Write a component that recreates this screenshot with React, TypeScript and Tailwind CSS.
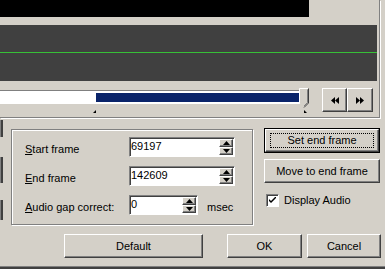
import type { ReactNode } from 'react'

// classic 3D bevels
const raised =
  'border border-t-white border-l-white border-r-[#404040] border-b-[#404040] shadow-[inset_-1px_-1px_0_#808080]'
const sunken =
  'border border-t-[#808080] border-l-[#808080] border-r-white border-b-white shadow-[inset_1px_1px_0_#404040]'

function Btn({ children, className = '' }: { children?: ReactNode; className?: string }) {
  return (
    <div className={`flex items-center justify-center bg-[#d4d0c8] ${raised} ${className}`}>
      {children}
    </div>
  )
}

function Arrow({ up }: { up?: boolean }) {
  return (
    <svg width="7" height="4" viewBox="0 0 7 4">
      <polygon points={up ? '3.5,0 7,4 0,4' : '0,0 7,0 3.5,4'} fill="#000" />
    </svg>
  )
}

function SpinField({ value, width }: { value: string; width: string }) {
  return (
    <div className={`flex h-[20px] bg-white ${sunken} ${width}`}>
      <span className="flex-1 pl-[1px] leading-[17px]">{value}</span>
      <div className="flex w-[15px] flex-col py-[1px] pr-[1px]">
        <Btn className="h-[8px]">
          <Arrow up />
        </Btn>
        <Btn className="h-[8px]">
          <Arrow />
        </Btn>
      </div>
    </div>
  )
}

function Label({ first, rest }: { first: string; rest: string }) {
  return (
    <span className="mt-[4px] w-[104px]">
      <span className="underline underline-offset-[1px]">{first}</span>
      {rest}
    </span>
  )
}

function Seek({ back }: { back?: boolean }) {
  return (
    <svg width="8" height="7" viewBox="0 0 8 7">
      {back ? (
        <>
          <polygon points="4,0 0,3.5 4,7" fill="#000" />
          <polygon points="8,0 4,3.5 8,7" fill="#000" />
        </>
      ) : (
        <>
          <polygon points="0,0 4,3.5 0,7" fill="#000" />
          <polygon points="4,0 8,3.5 4,7" fill="#000" />
        </>
      )}
    </svg>
  )
}

export default function App() {
  return (
    <div className="relative flex h-[269px] w-[385px] flex-col overflow-hidden bg-[#d4d0c8] font-['Liberation_Sans',Arial,sans-serif] text-[11px] text-black">
      {/* preview + audio + trackbar */}
      <div className="flex h-[118px] w-[380px] flex-col border-r border-b border-[#808080] shadow-[1px_1px_0_white]">
        <div className="h-[17px] w-[309px] bg-black" />
        <div className="mt-[8px] flex h-[56px] w-[377px] flex-col bg-[#404040]">
          <div className="mt-[27px] h-[1px] w-full bg-[#37c037]" />
        </div>
        <div className="relative flex h-[36px] items-start">
          <div className="mt-[9px] flex h-[14px] w-[304px] border-t border-[#808080] bg-white">
            <div className="mt-[2px] ml-[96px] h-[9px] w-[204px] bg-[#0a246a]" />
          </div>
          <svg className="absolute top-[7px] left-[299px]" width="10" height="21" viewBox="0 0 10 21">
            <polygon points="0.5,0.5 9.5,0.5 9.5,15 5,20 0.5,15" fill="#d4d0c8" />
            <polyline points="0.5,15 0.5,0.5 9,0.5" fill="none" stroke="#fff" />
            <polyline points="9.5,0.5 9.5,15 5,19.5" fill="none" stroke="#404040" />
            <polyline points="8.5,1.5 8.5,14.5 5,18" fill="none" stroke="#808080" />
          </svg>
          <svg className="absolute top-[29px] left-[93px]" width="3" height="3" viewBox="0 0 3 3">
            <polygon points="3,0 3,3 0,3" fill="#000" />
          </svg>
          <svg className="absolute top-[29px] left-[304px]" width="3" height="3" viewBox="0 0 3 3">
            <polygon points="0,0 3,3 0,3" fill="#000" />
          </svg>
          <div className="mt-[7px] ml-[18px] flex">
            <Btn className="h-[24px] w-[25px]">
              <Seek back />
            </Btn>
            <Btn className="h-[24px] w-[26px]">
              <Seek />
            </Btn>
          </div>
        </div>
      </div>

      {/* range controls */}
      <div className="flex h-[116px] items-start">
        <div className="flex w-[3px] flex-col">
          <div className="mt-[2px] h-[17px] border-r-2 border-[#404040] bg-[#808080]" />
          <div className="mt-[20px] h-[26px] border-r-2 border-[#404040] bg-[#808080]" />
          <div className="mt-[17px] h-[20px] border-r-2 border-[#404040] bg-[#808080]" />
        </div>
        <div className="mt-[11px] ml-[8px] flex h-[96px] w-[242px] flex-col border border-[#808080] pt-[7px] pl-[13px] shadow-[inset_1px_1px_0_white,1px_1px_0_white]">
          <div className="flex items-center">
            <Label first="S" rest="tart frame" />
            <SpinField value="69197" width="w-[106px]" />
          </div>
          <div className="mt-[8px] flex items-center">
            <Label first="E" rest="nd frame" />
            <SpinField value="142609" width="w-[106px]" />
          </div>
          <div className="mt-[9px] flex items-center">
            <Label first="A" rest="udio gap correct:" />
            <SpinField value="0" width="w-[69px]" />
            <span className="mt-[4px] ml-[9px]">msec</span>
          </div>
        </div>
        <div className="mt-[10px] ml-[11px] flex w-[116px] flex-col">
          <div className="h-[25px] border border-black">
            <Btn className="h-full w-full">
              <div className="flex h-[15px] w-[104px] items-center justify-center border border-dotted border-black">
                Set end frame
              </div>
            </Btn>
          </div>
          <Btn className="mt-[6px] h-[24px]">Move to end frame</Btn>
          <div className="mt-[9px] ml-[2px] flex items-center">
            <div className={`flex h-[13px] w-[13px] items-center justify-center bg-white ${sunken}`}>
              <svg width="7" height="7" viewBox="0 0 7 7">
                <path d="M0 2 L2 4 L7 -1 L7 1 L2 6 L0 4 Z" fill="#000" />
              </svg>
            </div>
            <span className="ml-[5px]">Display Audio</span>
          </div>
        </div>
      </div>

      {/* dialog buttons */}
      <div className="flex h-[24px]">
        <Btn className="ml-[64px] w-[139px]">Default</Btn>
        <Btn className="ml-[24px] w-[75px]">OK</Btn>
        <Btn className="ml-[5px] w-[74px]">Cancel</Btn>
      </div>
      <div className="mt-[8px] h-[3px] border-t border-[#808080] bg-[#404040]" />
    </div>
  )
}
